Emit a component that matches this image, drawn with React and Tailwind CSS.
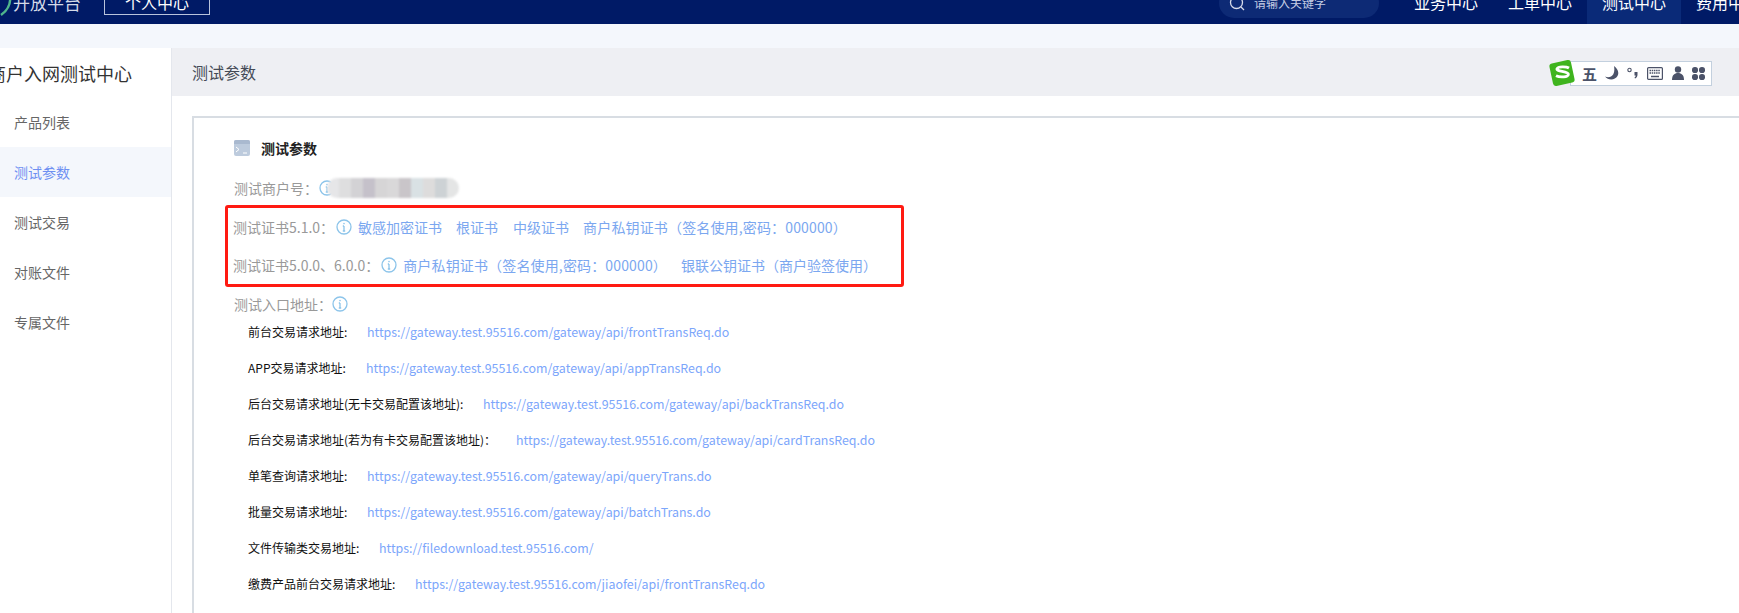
import React from "react";

const font = { fontFamily: '"Noto Sans CJK SC", "Noto Sans", sans-serif' };

const sideItems = ["产品列表", "测试参数", "测试交易", "对账文件", "专属文件"];

const urls = [
  ["前台交易请求地址:", "https://gateway.test.95516.com/gateway/api/frontTransReq.do", "w-[119px]"],
  ["APP交易请求地址:", "https://gateway.test.95516.com/gateway/api/appTransReq.do", "w-[118px]"],
  ["后台交易请求地址(无卡交易配置该地址):", "https://gateway.test.95516.com/gateway/api/backTransReq.do", "w-[235px]"],
  ["后台交易请求地址(若为有卡交易配置该地址)：", "https://gateway.test.95516.com/gateway/api/cardTransReq.do", "w-[268px]"],
  ["单笔查询请求地址:", "https://gateway.test.95516.com/gateway/api/queryTrans.do", "w-[119px]"],
  ["批量交易请求地址:", "https://gateway.test.95516.com/gateway/api/batchTrans.do", "w-[119px]"],
  ["文件传输类交易地址:", "https://filedownload.test.95516.com/", "w-[131px]"],
  ["缴费产品前台交易请求地址:", "https://gateway.test.95516.com/jiaofei/api/frontTransReq.do", "w-[167px]"],
];

function Info({ className = "" }) {
  return (
    <svg viewBox="0 0 16 16" className={"h-4 w-4 shrink-0 " + className} fill="none" stroke="#8cc4ea" strokeWidth="1.3">
      <circle cx="8" cy="8" r="7" />
      <path d="M8 7v5M6.8 7H8M6.8 12h2.4" />
      <circle cx="8" cy="4.6" r="0.8" fill="#8cc4ea" stroke="none" />
    </svg>
  );
}

function Sogou() {
  return (
    <div className="absolute left-[1571px] top-[62px] flex h-[23px] w-[140px] items-center bg-white pb-[1px] pl-[11px] shadow-[0_0_0_1px_#c3d0de]">
      <svg viewBox="0 0 28 28" className="absolute -left-[23px] -top-[3px] h-[28px] w-[28px]">
        <rect x="3" y="2.500" width="22" height="23" rx="3" fill="#3fb41e" transform="rotate(-12 14 14)" />
        <path d="M21 9c-2.500-1.500-11-2-12 .8-1 2.800 11 2.200 11.400 5.400.4 3-8.400 3.500-12.400 1.500" fill="none" stroke="#fff" strokeWidth="2.800" />
      </svg>
      <span className="w-[15px] text-[15px] font-semibold leading-none text-[#4b5268]">五</span>
      <svg viewBox="0 0 14 14" className="ml-[8px] h-[14px] w-[14px]">
        <path d="M9 0c3.500 2.500 5.500 6.500 3.500 10C10 14.500 3 14.500 0 10.500c3 1.200 6.500.8 8.300-2.300C9.500 6 9.600 3 9 0z" fill="#4b5268" />
      </svg>
      <svg viewBox="0 0 11 12" className="ml-[8px] h-[12px] w-[11px]">
        <circle cx="2.500" cy="3" r="1.700" fill="none" stroke="#4b5268" strokeWidth="1.100" />
        <path d="M7.500 5h3v2.500c0 2-1 3.500-2.500 4l-.5-.9c.8-.5 1.200-1.200 1.200-2.100H7.500z" fill="#4b5268" />
      </svg>
      <svg viewBox="0 0 16 13" className="ml-[9px] h-[13px] w-[16px]">
        <rect x="0.600" y="0.600" width="14.800" height="11.800" rx="1" fill="none" stroke="#4b5268" strokeWidth="1.200" />
        <path d="M2.500 3.500h11M2.500 6h11" stroke="#4b5268" strokeWidth="1.500" strokeDasharray="1.500 0.700" />
        <path d="M4 9.500h8" stroke="#4b5268" strokeWidth="1.500" />
      </svg>
      <svg viewBox="0 0 12 14" className="ml-[9px] h-[14px] w-[12px]">
        <circle cx="6" cy="3.500" r="3.200" fill="#4b5268" />
        <path d="M0 14c0-5 2.500-7 6-7s6 2 6 7z" fill="#4b5268" />
      </svg>
      <svg viewBox="0 0 13 13" className="ml-[8px] h-[13px] w-[13px]" fill="#4b5268">
        <rect x="0" y="0" width="6" height="6" rx="2.800" />
        <rect x="7" y="0" width="6" height="6" rx="2.800" />
        <rect x="0" y="7" width="6" height="6" rx="2.800" />
        <rect x="7" y="7" width="6" height="6" rx="2.800" />
      </svg>
    </div>
  );
}

const blurCells = ["#e6e6e8", "#dededf", "#d3d2d5", "#c5c1ca", "#d6d5d6", "#d9d8d9", "#c9c5c9", "#d9e1e4", "#dddcdc", "#cdd2d5", "#e4e5e5"];

export default function App() {
  return (
    <div className="relative h-[613px] w-[1739px] overflow-hidden bg-white" style={font}>
      <header className="h-[24px] overflow-hidden bg-[#001a66]">
        <div className="-mt-[22px] flex h-[50px] items-center text-white">
          <svg viewBox="0 0 13 30" className="h-[30px] w-[13px] shrink-0">
            <path d="M-2 8h12c1 8-3 15-9 19" fill="none" stroke="#4fb58c" strokeWidth="2.500" />
          </svg>
          <span className="-mt-[2px] w-[68px] shrink-0 whitespace-nowrap text-[17px] leading-none text-[#d5dbe8]">开放平台</span>
          <div className="ml-[23px] flex h-[24px] w-[106px] shrink-0 items-center justify-center border border-[#b9c3dc] pb-[2px] whitespace-nowrap text-[16px] leading-none">个人中心</div>
          <div className="ml-[1009px] flex h-[30px] w-[160px] shrink-0 items-center rounded-[15px] bg-[#0d2a75] pl-[10px]">
            <svg viewBox="0 0 16 16" className="h-[16px] w-[16px]" fill="none" stroke="#d7dceb" strokeWidth="1.300">
              <circle cx="7.500" cy="7.500" r="6" />
              <path d="M12 12l3 3" />
            </svg>
            <span className="ml-[9px] whitespace-nowrap text-[12px] leading-none text-[#c5cde4]">请输入关键字</span>
          </div>
          <nav className="ml-[20px] flex h-full shrink-0 items-center whitespace-nowrap text-[16px] leading-none">
            <span className="flex h-full items-center px-[15px] pb-[2px]">业务中心</span>
            <span className="flex h-full items-center px-[15px] pb-[2px]">工单中心</span>
            <span className="flex h-full items-center bg-[#0a2a78] px-[15px] pb-[2px]">测试中心</span>
            <span className="flex h-full items-center px-[15px] pb-[2px]">费用中心</span>
          </nav>
        </div>
      </header>

      <div className="h-[24px] bg-[#f4f7fc]" />

      <div className="flex h-[565px]">
        <aside className="w-[172px] shrink-0 border-r border-[#e4e7ed] bg-white">
          <div className="-ml-[12px] flex h-[49px] items-center whitespace-nowrap text-[18px] leading-none text-[#333333]">商户入网测试中心</div>
          {sideItems.map((t, i) => (
            <div
              key={t}
              className={
                "flex h-[50px] items-center pl-[14px] text-[14px] leading-none " +
                (i === 1 ? "bg-[#f4f7fc] text-[#6e8ff2]" : "text-[#666666]")
              }
            >
              {t}
            </div>
          ))}
        </aside>

        <main className="min-w-0 flex-1">
          <div className="flex h-[48px] items-center bg-[#eeeff3] pl-[20px] text-[16px] leading-none text-[#444a55]">测试参数</div>
          <div className="pl-[20px] pt-[20px]">
            <section className="h-[600px] border-l-2 border-t-2 border-[#d8dde3] pl-[40px] pt-[4px]">
              <div className="flex h-[50px] items-center pt-[1px]">
                <div className="flex h-[16px] w-[16px] flex-col overflow-hidden rounded-[2px] bg-[#bdcbdd]">
                  <div className="h-[4px] bg-[#a9b9cf]" />
                  <svg viewBox="0 0 16 12" className="h-[12px] w-[16px]" fill="none" stroke="#fff" strokeWidth="1">
                    <path d="M2 3l3 2.500L2 8M9 9h4" />
                  </svg>
                </div>
                <span className="ml-[11px] text-[14px] font-bold leading-none text-[#222222]">测试参数</span>
              </div>

              <div className="mt-[4px] flex h-[24px] items-center text-[14px] leading-none text-[#999999]">
                <span>测试商户号：</span>
                <Info className="ml-[1px]" />
                <div className="-ml-[8px] flex h-[20px] overflow-hidden rounded-[10px] blur-[1px]">
                  {blurCells.map((c, i) => (
                    <div key={i} className="h-full w-[12px]" style={{ backgroundColor: c }} />
                  ))}
                </div>
              </div>

              <div className="-ml-[9px] mt-[5px] flex h-[82px] w-[679px] flex-col justify-center gap-[14px] rounded-[3px] border-[3px] border-[#ff1a12] pl-[5px] text-[14px] leading-none">
                <div className="flex h-[24px] items-center whitespace-nowrap">
                  <span className="text-[#999999]">测试证书5.1.0：</span>
                  <Info className="ml-[2px]" />
                  <span className="ml-[6px] text-[#7ba7f0]">敏感加密证书</span>
                  <span className="ml-[14px] text-[#7ba7f0]">根证书</span>
                  <span className="ml-[15px] text-[#7ba7f0]">中级证书</span>
                  <span className="ml-[14px] tracking-[0.15px] text-[#7ba7f0]">商户私钥证书（签名使用,密码：000000）</span>
                </div>
                <div className="flex h-[24px] items-center whitespace-nowrap">
                  <span className="text-[#999999]">测试证书5.0.0、6.0.0：</span>
                  <Info className="ml-[2px]" />
                  <span className="ml-[6px] tracking-[0.15px] text-[#7ba7f0]">商户私钥证书（签名使用,密码：000000）</span>
                  <span className="ml-[14px] text-[#7ba7f0]">银联公钥证书（商户验签使用）</span>
                </div>
              </div>

              <div className="mt-[5px] flex h-[24px] items-center text-[14px] leading-none text-[#999999]">
                <span>测试入口地址：</span>
                <Info className="ml-[0px]" />
              </div>

              <div className="-mt-[2px] pl-[14px]">
                {urls.map(([label, url, w]) => (
                  <div key={url} className="flex h-[36px] items-center whitespace-nowrap leading-none">
                    <span className={"shrink-0 text-[12px] text-[#111111] " + w}>{label}</span>
                    <span className="text-[12.4px] text-[#7ca6fb]">{url}</span>
                  </div>
                ))}
              </div>
            </section>
          </div>
        </main>
      </div>

      <Sogou />
    </div>
  );
}
